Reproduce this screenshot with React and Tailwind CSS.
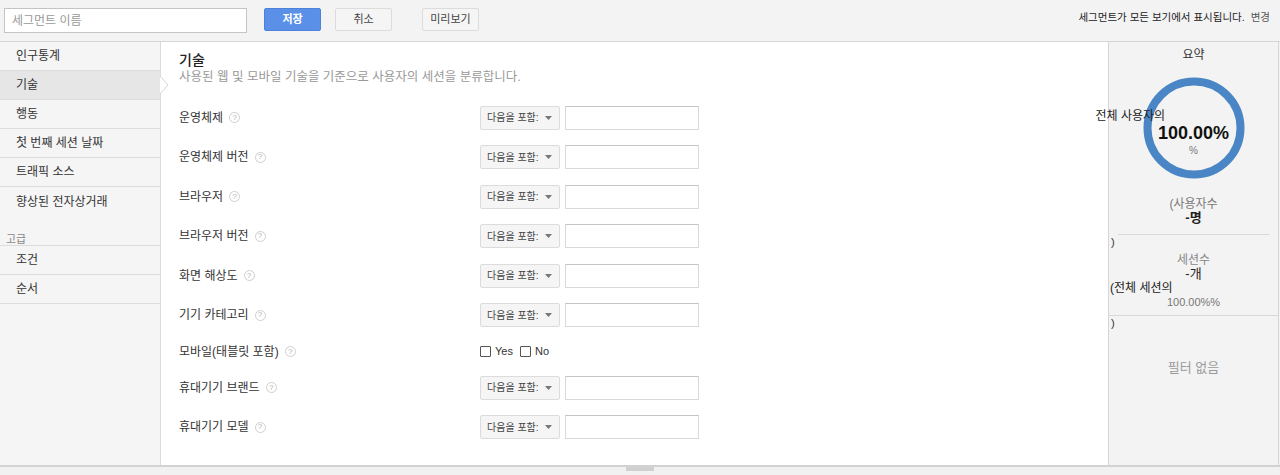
import React from "react";

const FONT = { fontFamily: "'Liberation Sans', 'Noto Sans CJK KR', Arial, sans-serif" };

const navTop = ["인구통계", "기술", "행동", "첫 번째 세션 날짜", "트래픽 소스", "향상된 전자상거래"];
const navAdv = ["조건", "순서"];

const rows = [
  { label: "운영체제", kind: "match" },
  { label: "운영체제 버전", kind: "match" },
  { label: "브라우저", kind: "match" },
  { label: "브라우저 버전", kind: "match" },
  { label: "화면 해상도", kind: "match" },
  { label: "기기 카테고리", kind: "match" },
  { label: "모바일(태블릿 포함)", kind: "check" },
  { label: "휴대기기 브랜드", kind: "match" },
  { label: "휴대기기 모델", kind: "match" },
];

function Help() {
  return (
    <span className="ml-[6px] inline-flex h-[11px] w-[11px] items-center justify-center rounded-full border border-[#cfcfcf] text-[8px] leading-none text-[#b0b0b0]">
      ?
    </span>
  );
}

function MatchSelect() {
  return (
    <div className="flex items-center gap-[5px]">
      <div className="flex h-[24px] w-[80px] items-center justify-between rounded-[2px] border border-[#dcdcdc] bg-[#f5f5f5] pl-[6px] pr-[6px] text-[10px] text-[#444]">
        <span>다음을 포함:</span>
        <svg width="7" height="4" viewBox="0 0 7 4" className="mr-[1px]">
          <path d="M0 0 L7 0 L3.5 4 Z" fill="#777" />
        </svg>
      </div>
      <div className="h-[24px] w-[134px] border border-[#d9d9d9] border-t-[#c4c4c4] bg-white" />
    </div>
  );
}

function CheckPair() {
  return (
    <div className="flex items-center text-[11px] text-[#333]">
      <span className="h-[11px] w-[11px] rounded-[1px] border border-[#555] bg-white" />
      <span className="ml-[4px]">Yes</span>
      <span className="ml-[7px] h-[11px] w-[11px] rounded-[1px] border border-[#555] bg-white" />
      <span className="ml-[4px]">No</span>
    </div>
  );
}

export default function App() {
  return (
    <div className="flex h-[475px] w-[1280px] flex-col overflow-hidden bg-[#f3f3f3]" style={FONT}>
      {/* toolbar */}
      <div className="flex h-[42px] shrink-0 items-start border-b border-[#d6d6d6] bg-[#f3f3f3] pl-[4px] pr-[10px] pt-[8px]">
        <div className="flex h-[25px] w-[243px] items-center border border-[#c4c4c4] bg-white pl-[7px] text-[12px] text-[#999]">
          세그먼트 이름
        </div>
        <button className="ml-[17px] h-[23px] w-[57px] rounded-[2px] border border-[#4c82d9] bg-[#5b90e8] text-[11px] font-bold text-white">
          저장
        </button>
        <button className="ml-[14px] h-[23px] w-[57px] rounded-[2px] border border-[#dcdcdc] bg-[#f5f5f5] text-[11px] text-[#444]">
          취소
        </button>
        <button className="ml-[30px] h-[23px] w-[57px] rounded-[2px] border border-[#dcdcdc] bg-[#f5f5f5] text-[11px] text-[#444]">
          미리보기
        </button>
        <div className="ml-auto mt-[2px] text-[10.5px] text-[#222]">
          세그먼트가 모든 보기에서 표시됩니다.
          <span className="ml-[6px] text-[#555]">변경</span>
        </div>
      </div>

      {/* body */}
      <div className="flex min-h-0 flex-1 pr-[1px]">
        {/* category list */}
        <div className="w-[161px] shrink-0 border-r border-[#dadada] bg-[#f5f5f5] text-[12px] text-[#333]">
          {navTop.map((t, i) => (
            <div
              key={t}
              className={
                "relative flex h-[29px] items-center pl-[16px] " +
                (i < navTop.length - 1 ? "border-b border-[#dcdcdc] " : "") +
                (i === 1 ? "bg-[#e6e6e6]" : "")
              }
            >
              {t}
              {i === 1 && (
                <svg width="9" height="18" viewBox="0 0 9 18" className="absolute right-[-9px] top-[5px]">
                  <path d="M0 0 L8 9 L0 18 Z" fill="#ffffff" />
                  <path d="M0 0 L8 9 L0 18" fill="none" stroke="#d4d4d4" strokeWidth="1" />
                </svg>
              )}
            </div>
          ))}
          <div className="mt-[16px] flex h-[14px] items-end border-b border-[#dcdcdc] pl-[6px] text-[11px] leading-[12px] text-[#888]">
            고급
          </div>
          {navAdv.map((t) => (
            <div key={t} className="flex h-[29px] items-center border-b border-[#dcdcdc] pl-[16px]">
              {t}
            </div>
          ))}
        </div>

        {/* criteria */}
        <div className="flex-1 bg-white pl-[18px] pt-[9px]">
          <div className="text-[14px] font-medium leading-[18px] text-[#222]">기술</div>
          <div className="text-[12.5px] leading-[16px] text-[#999]">
            사용된 웹 및 모바일 기술을 기준으로 사용자의 세션을 분류합니다.
          </div>
          <div className="mt-[13px]">
            {rows.map((r) => (
              <div
                key={r.label}
                className={"flex items-center " + (r.kind === "check" ? "h-[33px]" : "h-[39.5px]")}
              >
                <div className="flex w-[301px] items-center text-[12px] text-[#333]">
                  {r.label}
                  <Help />
                </div>
                {r.kind === "match" ? <MatchSelect /> : <CheckPair />}
              </div>
            ))}
          </div>
        </div>

        {/* summary */}
        <div className="w-[171px] shrink-0 border-l border-r border-[#d6d6d6] bg-[#f3f3f3] text-center">
          <div className="pt-[5px] text-[12px] leading-[16px] text-[#333]">요약</div>
          <div className="relative mx-auto mt-[14px] h-[102px] w-[102px]">
            <svg width="102" height="102" viewBox="0 0 102 102" className="absolute inset-0">
              <circle cx="51" cy="51" r="46.5" fill="none" stroke="#4a86c6" strokeWidth="8" />
            </svg>
            <div className="absolute left-[-47px] top-[32px] whitespace-nowrap text-[12px] leading-[14px] text-[#222]">
              전체 사용자의
            </div>
            <div className="absolute inset-x-[-10px] top-[46px] text-[18px] font-bold leading-[20px] text-[#111]">
              100.00%
            </div>
            <div className="absolute inset-x-0 top-[68px] text-[10px] leading-[12px] text-[#777]">%</div>
          </div>
          <div className="mt-[18px] text-[12px] leading-[14px] text-[#777]">(사용자수</div>
          <div className="text-[13px] font-bold leading-[14px] text-[#222]">-명</div>
          <div className="mx-[9px] mt-[9px] border-b border-[#d8d8d8]" />
          <div className="pl-[2px] text-left text-[11px] leading-[14px] text-[#333]">)</div>
          <div className="mt-[4px] text-[12px] leading-[14px] text-[#888]">세션수</div>
          <div className="text-[13px] leading-[13px] text-[#222]">-개</div>
          <div className="pl-[1px] text-left text-[12px] leading-[16px] text-[#222]">(전체 세션의</div>
          <div className="text-[11px] leading-[12px] text-[#777]">100.00%%</div>
          <div className="mt-[7px] border-b border-[#d8d8d8]" />
          <div className="pl-[2px] text-left text-[11px] leading-[14px] text-[#333]">)</div>
          <div className="mt-[28px] text-[13px] text-[#999]">필터 없음</div>
        </div>
      </div>

      {/* resize handle strip */}
      <div className="flex h-[10px] shrink-0 justify-center border-t-2 border-[#d2d2d2] bg-[#f1f1f1]">
        <div className="h-[4px] w-[28px] bg-[#d0d0d0]" />
      </div>
    </div>
  );
}
